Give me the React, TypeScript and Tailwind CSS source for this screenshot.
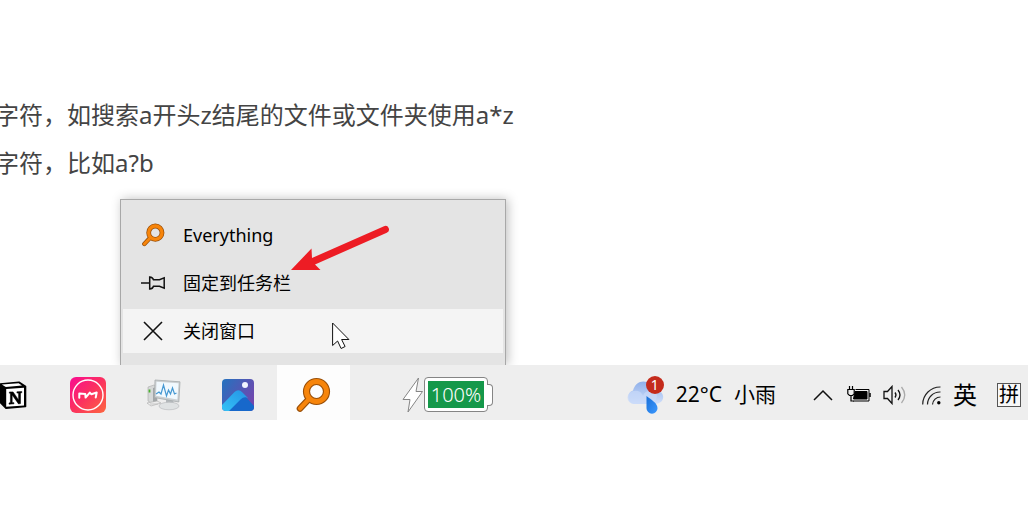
import type { ReactNode } from "react"

const sans = "font-['Noto_Sans','Noto_Sans_CJK_SC',sans-serif]"

function SearchIcon({ className }: { className: string }) {
  return (
    <svg viewBox="0 0 36 36" className={className} fill="none" strokeLinecap="round">
      <path d="M5 31.5 13 23" stroke="#9a4f08" strokeWidth="6.6" />
      <circle cx="21.5" cy="14.5" r="10" stroke="#9a4f08" strokeWidth="7.2" />
      <path d="M5 31.5 14 22" stroke="#f7850b" strokeWidth="4.2" />
      <circle cx="21.5" cy="14.5" r="10" stroke="#f7850b" strokeWidth="5" />
    </svg>
  )
}

function PinIcon() {
  return (
    <svg viewBox="0 0 24 14" className="h-[14px] w-6" fill="none" stroke="#111" strokeWidth="1.5">
      <path d="M0 7h8.5M8.7 1v12q3-.2 3.8-2.8h6l4.700 2V1.800l-4.700 2h-6Q11.700 1.200 8.700 1Z" />
    </svg>
  )
}

function CloseIcon() {
  return (
    <svg viewBox="0 0 20 20" className="size-5" fill="none" stroke="#111" strokeWidth="1.6">
      <path d="m1 1 18 18M19 1 1 19" />
    </svg>
  )
}

function NotionIcon() {
  return (
    <svg viewBox="0 0 28 28" className="size-7">
      <path d="M1 3 20 1.200 26.500 5.500v20L7 27.200 1 21Z" fill="#000" stroke="#000" strokeWidth="1.600" strokeLinejoin="round" />
      <path d="M2.800 3.500 19.600 2.200l3.400 2.300L6.800 5.900Z" fill="#fff" />
      <path d="M7.200 8 25 6.700v17.800L7.200 25.700Z" fill="#fff" />
      <path d="M10.500 10.900h3.600l5.500 8v-6.700l-1.700-.3v-1.100l4.900-.3v1.200l-1.300.4v10.500l-2 .3-6.300-9v7.500l1.800.3v1.100l-5 .4v-1.200l1.400-.5v-9l-1.200-.4Z" fill="#000" stroke="#000" strokeWidth=".5" />
    </svg>
  )
}

function MindIcon() {
  return (
    <svg viewBox="0 0 36 36" className="size-9">
      <defs>
        <linearGradient id="mind" x1="0" y1="0" x2="1" y2="1">
          <stop offset="0" stopColor="#f90b91" />
          <stop offset=".5" stopColor="#fb315f" />
          <stop offset="1" stopColor="#fd673f" />
        </linearGradient>
      </defs>
      <rect width="36" height="36" rx="6" fill="url(#mind)" />
      <circle cx="18" cy="18" r="15" fill="none" stroke="#fff" strokeWidth="1.400" />
      <path d="M9.300 20.800v-4.300l6 .6.300 3.500 4.200-5 1.600 1.600 5.300-1.700-1 5" fill="none" stroke="#fff" strokeWidth="2" strokeLinejoin="round" strokeLinecap="round" />
    </svg>
  )
}

function MonitorIcon() {
  return (
    <svg viewBox="0 0 36 32" className="h-8 w-9">
      <path d="m3 8 6-2 3 2v14l-4 3-5-3Z" fill="#d6d8d8" stroke="#aaa" strokeWidth=".6" />
      <path d="m8 9 4-1v14l-4 3Z" fill="#a2a6a8" />
      <path d="M4.500 10.500v3" stroke="#48b22c" strokeWidth="1.800" />
      <path d="m2 24 10-2 4 2-10 3Z" fill="#eee" stroke="#aaa" strokeWidth=".6" />
      <path d="M5 25h8" stroke="#bbb" strokeWidth=".8" />
      <path d="m21 19 7 1 1 7-8-1Z" fill="#b4b9bc" />
      <ellipse cx="24" cy="27" rx="10" ry="3.800" fill="#dfe2e3" stroke="#b3b6b8" strokeWidth=".6" />
      <path d="m10 1 25 1.800-1.200 20.200L9.500 18.500Z" fill="#cdd1d3" stroke="#a6abac" strokeWidth=".8" />
      <path d="m11.500 2.800 22 1.500-1.200 16.200L11 16.800Z" fill="#f1f9fe" />
      <path d="m11 15 3-2 2 2 2.500-9 3 11 2-6 2 4 2-6 2 6 2-1" fill="none" stroke="#4598d2" strokeWidth="1.200" />
    </svg>
  )
}

function PhotosIcon() {
  return (
    <svg viewBox="0 0 32 32" className="size-8">
      <defs>
        <linearGradient id="sky" x1="0" y1="0" x2="1" y2=".6">
          <stop offset="0" stopColor="#2373bf" />
          <stop offset="1" stopColor="#7047ae" />
        </linearGradient>
        <linearGradient id="slope" x1="0" y1="1" x2="1" y2="0">
          <stop offset="0" stopColor="#35c5f7" />
          <stop offset="1" stopColor="#2492e5" />
        </linearGradient>
        <clipPath id="tile">
          <rect width="32" height="32" rx="4" />
        </clipPath>
      </defs>
      <g clipPath="url(#tile)">
        <rect width="32" height="32" fill="url(#sky)" />
        <path d="M3 32 17 15q2-2 5 1l11 12v4Z" fill="#1768cb" />
        <path d="M-1 27 12.500 13q4-3.500 8 .500l6 6q-4-3-8 1L6 33H-1Z" fill="url(#slope)" />
        <circle cx="23" cy="6" r="3" fill="#f0f5ff" />
      </g>
    </svg>
  )
}

function Battery() {
  return (
    <div className="ml-[52px] flex items-center">
      <svg viewBox="0 0 22 36" className="h-9 w-[22px]" fill="#fff" stroke="#858585" strokeWidth="1">
        <path d="M16.500 1 1 22.500h7L6 35l14.500-20.500H14Z" />
      </svg>
      <div className="rounded-sm border border-[#858585] bg-white p-[3px]">
        <div className="flex h-[27px] w-14 items-center justify-center bg-[#15984a] text-xl leading-7 font-light text-white">
          100%
        </div>
      </div>
      <div className="-ml-px h-[22px] w-[6px] rounded-r-sm border border-l-0 border-[#858585] bg-white" />
    </div>
  )
}

function WeatherIcon() {
  return (
    <span className="relative block">
      <svg viewBox="0 0 38 38" className="size-[38px]">
        <defs>
          <linearGradient id="cloud" x1="0" y1="0" x2="0" y2="1">
            <stop offset="0" stopColor="#8fb0ea" />
            <stop offset="1" stopColor="#d0dffa" />
          </linearGradient>
          <linearGradient id="drop" x1="0" y1="0" x2="1" y2="1">
            <stop offset="0" stopColor="#186fd8" />
            <stop offset="1" stopColor="#3b98ff" />
          </linearGradient>
        </defs>
        <path d="M8 28a7 7 0 0 1-1-13.500C9 7 15 4 21 6c5 1 7 5 7.500 8C40 14 40 28 29 28Z" fill="url(#cloud)" />
        <path d="M8 28a6.500 6.500 0 0 1 0-13c5-1 8 2 9 5 2-7 13-7 14 0l-2 8Z" fill="#c9dafa" opacity=".7" />
        <path d="M20.500 20c5 4 11 7 11 12.200a5.500 5.500 0 0 1-11 0Z" fill="url(#drop)" />
      </svg>
      <span className="absolute top-0 right-0 flex size-[18px] items-center justify-center rounded-full bg-[#c42b1c] text-sm leading-none text-white">
        1
      </span>
    </span>
  )
}

function TaskButton({ label, active, children }: { label: string; active?: boolean; children: ReactNode }) {
  return (
    <button
      aria-label={label}
      className={`flex w-[73px] shrink-0 items-center justify-center self-stretch pt-[5px] pr-[2px] ${active ? "bg-[#fdfdfd]" : ""}`}
    >
      {children}
    </button>
  )
}

function MenuItem({ icon, label, hovered }: { icon: ReactNode; label: string; hovered?: boolean }) {
  return (
    <button
      role="menuitem"
      className={`flex h-11 w-full items-center gap-4 pl-4 text-left text-lg ${hovered ? "bg-[#f4f4f4]" : ""}`}
    >
      <span className="flex w-7 justify-center">{icon}</span>
      {label}
    </button>
  )
}

export default function App() {
  return (
    <div className={`overflow-hidden bg-white text-black ${sans}`}>
      <main className="pt-[91px]">
        <div className="-ml-[5px] text-2xl leading-[48px] whitespace-nowrap text-[#444]">
          <p>字符，如搜索a开头z结尾的文件或文件夹使用a*z</p>
          <p>字符，比如a?b</p>
        </div>

        <div
          role="menu"
          className="relative mt-3 ml-[120px] flex w-[386px] flex-col gap-1 border border-b-0 border-[#a8a8a8] bg-[#e4e4e4] px-[2px] pt-[13px] pb-3 shadow-[2px_0_10px_rgba(0,0,0,0.25)]"
        >
          <MenuItem icon={<SearchIcon className="size-6" />} label="Everything" />
          <MenuItem icon={<PinIcon />} label="固定到任务栏" />
          <MenuItem icon={<CloseIcon />} label="关闭窗口" hovered />

          {/* pointer arrow */}
          <svg viewBox="0 0 100 48" className="absolute top-[24px] left-[169px] h-12 w-[100px]">
            <path d="M1 46 21.500 24.500l.5 9.500L94 2.200a3.500 3.500 0 0 1 2.800 6.500L25 40.500l5.500 5.500Z" fill="#ed1c24" />
          </svg>
          <svg viewBox="0 0 18 28" className="absolute top-[122px] left-[211px] h-7 w-[18px]">
            <path d="M.6 1v22.500l5-4.500 3.500 7.500 4-2-3.500-7h7.300Z" fill="#fff" stroke="#111" strokeWidth="1" />
          </svg>
        </div>
      </main>

      <footer className="relative flex h-[55px] bg-[#eee]">
        <nav className="-ml-[23px] flex gap-[2px]">
          <TaskButton label="Notion">
            <NotionIcon />
          </TaskButton>
          <TaskButton label="Mind map">
            <MindIcon />
          </TaskButton>
          <TaskButton label="Task Manager">
            <MonitorIcon />
          </TaskButton>
          <TaskButton label="Photos">
            <PhotosIcon />
          </TaskButton>
          <TaskButton label="Everything" active>
            <SearchIcon className="size-9" />
          </TaskButton>
        </nav>

        <div className="flex items-center pt-1">
          <Battery />
        </div>

        <div className="ml-auto flex items-center pt-[5px] pr-[7px] whitespace-nowrap">
          <button className="mr-[37px] flex items-center gap-3 text-[21px]">
            <WeatherIcon />
            <span>22°C</span>
            <span>小雨</span>
          </button>
          <button aria-label="Show hidden icons" className="mr-[14px]">
            <svg viewBox="0 0 20 12" className="h-3 w-5" fill="none" stroke="#111" strokeWidth="1.500">
              <path d="m1 11 9-9 9 9" />
            </svg>
          </button>
          <button aria-label="Power" className="mr-3">
            <svg viewBox="0 0 24 18" className="h-[18px] w-6" fill="none" stroke="#000">
              <path d="M8.500 3.500h13.500v11.500H6" />
              <path d="M8 5.500h12v7.500H6.500z" fill="#000" />
              <path d="M23 7v4" strokeWidth="1.500" />
              <path d="M.8 3.500h6.400v4.300L5.500 9.500h-3L.8 7.800ZM2.500 0v3M5.500 0v3M4 10v5h3" fill="#eee" strokeWidth="1.200" />
            </svg>
          </button>
          <button aria-label="Volume" className="mr-[15px]">
            <svg viewBox="0 0 24 20" className="h-5 w-6" fill="none" stroke="#111" strokeWidth="1.300">
              <path d="M1 6.500h3.500L9 1.500v17l-4.500-5H1Z" />
              <path d="M12 7.500q2 2.500 0 5" />
              <path d="M15 5q4 5 0 10" />
              <path d="M18.500 2q6.500 8 0 16" stroke="#aaa" />
            </svg>
          </button>
          <button aria-label="Wi-Fi" className="mr-3">
            <svg viewBox="0 0 19 19" className="size-[19px]" fill="none" stroke="#222" strokeWidth="1.200">
              <path d="M.7 18.500A17.500 17.500 0 0 1 18.500 1" />
              <path d="M5.500 18.500A12.500 12.500 0 0 1 18.500 6" />
              <path d="M10.500 18.500A8 8 0 0 1 18.500 11" />
              <circle cx="16.800" cy="16.800" r="1.700" fill="#000" stroke="none" />
            </svg>
          </button>
          <button className="mr-5 text-2xl leading-6">英</button>
          <button className="flex size-6 items-center justify-center border border-[#555] bg-[#f8f8f8] text-xl leading-none">
            拼
          </button>
        </div>
      </footer>
    </div>
  )
}
